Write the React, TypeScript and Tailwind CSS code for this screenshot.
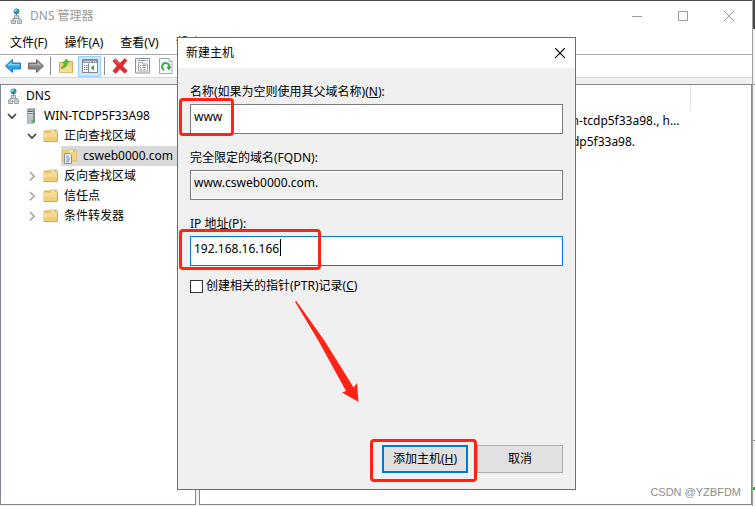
import type { ReactNode } from "react";

type IconProps = { className?: string };

function DnsIcon({ className }: IconProps) {
  return (
    <svg viewBox="0 0 16 16" className={className} aria-hidden="true">
      <path d="M8.500 6v5M5 12v-1.500h7V12" fill="none" stroke="#8b949b" />
      <circle cx="8.500" cy="3.300" r="2.900" fill="#2a72b8" />
      <path d="M6.300 2 8.500.8l.6 1.400-1.700 1.900-1.300-.6z" fill="#8edcf0" />
      <path d="M8.800 2.800l2.200-.4.2 1.800-2.200 1.600z" fill="#2fb54a" />
      <path d="M6.500 7.500h4v3h-4zM3.500 12h4v3.500h-4zM9.500 12h4v3.500h-4z" fill="#eceff1" stroke="#989fa5" />
      <path d="M7.500 9h2M4.500 13.800h2M10.500 13.800h2" stroke="#989fa5" />
    </svg>
  );
}

function ServerIcon({ className }: IconProps) {
  return (
    <svg viewBox="0 0 16 16" className={className} aria-hidden="true">
      <path d="M4 1.500 5.500.5H12v13.800l-1.600 1.200H4z" fill="#7c868e" />
      <path d="M4.400 1.800h5.800v13.400H4.400z" fill="#b8c1c8" />
      <path d="M5 3.500h4.600M5 5.800h4.600" stroke="#4b555d" />
      <path d="M5 4.500h4.600M5 6.800h4.600" stroke="#f4f6f7" strokeWidth=".8" />
      <path d="M8.400 12.400h2v2h-2z" fill="#37c437" />
    </svg>
  );
}

function FolderIcon({ className }: IconProps) {
  return (
    <svg viewBox="0 0 16 16" className={className} aria-hidden="true">
      <path d="M.5 3.500 1.300 2.500h5.500L8 1.500h6l.6.8V12L14 14H.5z" fill="#e3b95b" />
      <path d="M8.500 2.500h5.100v2H8.500z" fill="#fff" />
      <path d="M11 2.700h2.300v1H11z" fill="#3f9be0" />
      <path d="M1 4.400h6.500l1.200-.8h5.400v9.800H1z" fill="#f7dc90" />
      <path d="M1 9h13.100v4.400H1z" fill="#f1cf78" />
      <path d="M.5 13.600h13.700M14.400 4v9.400" stroke="#c99b3e" strokeWidth=".8" />
    </svg>
  );
}

function ZoneIcon({ className }: IconProps) {
  return (
    <svg viewBox="0 0 16 16" className={className} aria-hidden="true">
      <path d="M.5 2.500h6.500L8 1.500h6l.6.8V13H.5z" fill="#f3d27d" stroke="#ddb45a" strokeWidth=".6" />
      <path d="M8.500 2.400h5.100v1.600H8.500z" fill="#fff" />
      <path d="M11 2.600h2.300v1H11z" fill="#3f9be0" />
      <path d="M2.500 5.500h5l2 2v8h-7z" fill="#fff" stroke="#7a858e" strokeWidth=".9" />
      <path d="M4 8h3M4 10h4M4 12h4M4 13.800h3" stroke="#4478b4" strokeWidth=".9" />
    </svg>
  );
}

function Chevron({ open }: { open: boolean }) {
  return (
    <svg viewBox="0 0 16 16" className="size-4" aria-hidden="true">
      {open ? (
        <path d="m3 6 4 4 4-4" fill="none" stroke="#404040" strokeWidth="1.700" />
      ) : (
        <path d="m5 4 4.200 4.200L5 12.400" fill="none" stroke="#a3a3a3" strokeWidth="1.500" />
      )}
    </svg>
  );
}

function ArrowIcon({ back }: { back: boolean }) {
  return (
    <svg viewBox="0 0 16 16" className="size-4" aria-hidden="true">
      {back ? (
        <>
          <path d="M.4 8 7.400 1.500v3.500h8.100v6H7.400v3.500z" fill="#2da3e6" stroke="#1b6eae" strokeWidth=".9" />
          <path d="M2.200 7.600 6.500 3.700V6h8.100v1.600z" fill="#7bd0f7" />
        </>
      ) : (
        <>
          <path d="M15.600 8 8.600 1.500v3.500H.5v6h8.100v3.500z" fill="#868686" stroke="#5c5c5c" strokeWidth=".9" />
          <path d="M13.800 7.600 9.500 3.700V6H1.400v1.600z" fill="#adadad" />
        </>
      )}
    </svg>
  );
}

function FolderUpIcon() {
  return (
    <svg viewBox="0 0 16 16" className="size-4" aria-hidden="true">
      <path d="M1.500 4.500h4.500l1.200-1.200h7.300v11.300h-13z" fill="#f2d07c" stroke="#c99d45" strokeWidth=".8" />
      <path d="M2 9h12v5.200H2z" fill="#f6dc98" />
      <path d="M3 9.600C5.200 9 6.300 7.200 6.400 4.800L4.600 5 8.200 1l3.400 3-2 .3C9.200 7.600 7 10 3.400 10.600z" fill="#57bd34" stroke="#3f9a27" strokeWidth=".5" />
    </svg>
  );
}

function ConsoleTreeIcon() {
  return (
    <svg viewBox="0 0 16 16" className="size-4" aria-hidden="true">
      <path d="M.5 1.500h15v13H.5z" fill="#fff" stroke="#7c8791" />
      <path d="M1 2h14v3H1z" fill="#8d99a5" />
      <path d="M2 3.500h7" stroke="#c9d1d8" />
      <path d="M11 3.500h1M13 3.500h1" stroke="#fff" />
      <path d="M6.500 5.500v9" stroke="#7c8791" />
      <path d="M2 7.500h1M4 7.500h1.500M2 9.500h1M4 9.500h1.500M2 11.500h1M4 11.500h1.500" stroke="#3274b8" />
      <path d="M12 7v5.500L8.600 9.800z" fill="#38a52c" />
    </svg>
  );
}

function DeleteIcon() {
  return (
    <svg viewBox="0 0 16 16" className="size-4" aria-hidden="true">
      <path d="M.8 3 3.600.8 8 5.200 12.800.6 15 2.600 10.600 8l4.800 5-2.800 2.300L8 10.800 3.600 15.400.8 13l4.400-5z" fill="#dc2c30" stroke="#b5292c" strokeWidth=".6" />
      <path d="m2.500 2.800 1-.8L8 6.500" fill="none" stroke="#f3888a" strokeWidth=".9" />
    </svg>
  );
}

function PropertiesIcon() {
  return (
    <svg viewBox="0 0 16 16" className="size-4" aria-hidden="true">
      <path d="M.5.500h14v14.500H.5z" fill="#f7f8f9" stroke="#8b949b" />
      <path d="M2 2.500h9M12 2.500h1" stroke="#9ba5ad" />
      <path d="M3.500 4.500h4v1.500h5v7h-9z" fill="#fff" stroke="#8b949b" strokeWidth=".8" />
      <path d="M5 7.500h1M7 7.500h4M5 9.500h1M7 9.500h4" stroke="#4fa3d6" />
      <path d="M5 11.500h2M8.500 11.500h2" stroke="#8b949b" strokeWidth=".9" />
    </svg>
  );
}

function RefreshIcon() {
  return (
    <svg viewBox="0 0 16 16" className="size-4" aria-hidden="true">
      <path d="M1.500.5h9.500l3 3v12H1.500z" fill="#fff" stroke="#a0a7ad" />
      <path d="M11 .5v3h3" fill="#e6eaed" stroke="#a0a7ad" strokeWidth=".8" />
      <path d="M6.300 12A3.600 3.600 0 1 1 11.300 9" fill="none" stroke="#3cad42" strokeWidth="1.900" />
      <path d="M8.400 8.700h5L11 12.600z" fill="#2fa336" />
    </svg>
  );
}

const menus = ["文件(F)", "操作(A)", "查看(V)", "帮助(H)"];

type TreeItem = {
  label: string;
  icon: (props: IconProps) => ReactNode;
  indent: string;
  open?: boolean;
  selected?: boolean;
};

const tree: TreeItem[] = [
  { label: "DNS", icon: DnsIcon, indent: "pl-1" },
  { label: "WIN-TCDP5F33A98", icon: ServerIcon, indent: "pl-1", open: true },
  { label: "正向查找区域", icon: FolderIcon, indent: "pl-6", open: true },
  { label: "csweb0000.com", icon: ZoneIcon, indent: "pl-[60px]", selected: true },
  { label: "反向查找区域", icon: FolderIcon, indent: "pl-6", open: false },
  { label: "信任点", icon: FolderIcon, indent: "pl-6", open: false },
  { label: "条件转发器", icon: FolderIcon, indent: "pl-6", open: false },
];

const records = [
  { name: "(与父文件夹相同)", type: "起始授权机构(SOA)", data: "[1], win-tcdp5f33a98., h..." },
  { name: "(与父文件夹相同)", type: "名称服务器(NS)", data: "win-tcdp5f33a98." },
];

function TitleBar() {
  return (
    <header className="flex h-[29px] items-center bg-white text-[#999999]">
      <DnsIcon className="ml-2 size-4" />
      <h1 className="ml-1.5 flex-1 leading-4">DNS 管理器</h1>
      <button aria-label="最小化" className="flex h-7 w-[46px] items-center justify-center">
        <svg viewBox="0 0 10 10" className="size-2.5">
          <path d="M0 5.500h10" stroke="#999" />
        </svg>
      </button>
      <button aria-label="最大化" className="flex h-7 w-[46px] items-center justify-center">
        <svg viewBox="0 0 10 10" className="size-2.5">
          <path d="M.5.500h9v9h-9z" fill="none" stroke="#999" />
        </svg>
      </button>
      <button aria-label="关闭" className="flex h-7 w-[46px] items-center justify-center">
        <svg viewBox="0 0 10 10" className="size-2.5">
          <path d="m0 0 10 10M10 0 0 10" stroke="#999" />
        </svg>
      </button>
    </header>
  );
}

function ToolButton({ label, active, children }: { label: string; active?: boolean; children: ReactNode }) {
  return (
    <button
      aria-label={label}
      className={
        active
          ? "flex h-[21px] w-[23px] items-center justify-center border border-[#99d1ff] bg-[#cce8ff]"
          : "flex h-[21px] w-[23px] items-center justify-center"
      }
    >
      {children}
    </button>
  );
}

function Toolbar() {
  return (
    <div className="flex h-6 items-center border-y border-t-[#a9a9a9] border-b-[#d9d9d9] bg-white pl-px">
      <ToolButton label="后退"><ArrowIcon back /></ToolButton>
      <ToolButton label="前进"><ArrowIcon back={false} /></ToolButton>
      <span className="mx-[3px] h-[18px] w-px bg-[#8c8c8c]" />
      <ToolButton label="上一级"><FolderUpIcon /></ToolButton>
      <span className="w-px" />
      <ToolButton label="显示/隐藏控制台树" active><ConsoleTreeIcon /></ToolButton>
      <span className="mx-[3px] h-[18px] w-px bg-[#8c8c8c]" />
      <ToolButton label="删除"><DeleteIcon /></ToolButton>
      <ToolButton label="属性"><PropertiesIcon /></ToolButton>
      <ToolButton label="刷新"><RefreshIcon /></ToolButton>
    </div>
  );
}

function Tree() {
  return (
    <ul className="w-[196px] shrink-0 border border-[#828790] bg-white pt-px">
      {tree.map(({ label, icon: Icon, indent, open, selected }) => (
        <li key={label} className={`flex h-5 items-center ${indent}`}>
          {open !== undefined && (
            <button aria-label={open ? "折叠" : "展开"} className="mr-[2px]">
              <Chevron open={open} />
            </button>
          )}
          <span className={`flex h-5 items-center gap-[5px] ${selected ? "bg-[#d9d9d9] pl-px pr-1" : ""}`}>
            <Icon className="size-4" />
            <span className="whitespace-nowrap leading-4">{label}</span>
          </span>
        </li>
      ))}
    </ul>
  );
}

function RecordList() {
  return (
    <div className="min-w-0 flex-1 overflow-hidden border border-[#828790] bg-white">
      <table className="w-[491px] table-fixed border-collapse text-left">
        <thead>
          <tr className="h-[25px]">
            <th aria-label="名称" className="w-[170px] border-r border-[#e5e5e5]" />
            <th aria-label="类型" className="w-[160px] border-r border-[#e5e5e5]" />
            <th aria-label="数据" className="border-r border-[#e5e5e5]" />
          </tr>
        </thead>
        <tbody>
          {records.map((r) => (
            <tr key={r.type} className="h-[21px] whitespace-nowrap">
              <td className="pl-2">{r.name}</td>
              <td className="pl-2">{r.type}</td>
              <td className="pl-2">{r.data}</td>
            </tr>
          ))}
        </tbody>
      </table>
    </div>
  );
}

// Red annotation frame laid over the control it points out.
function Mark({ className }: { className: string }) {
  return <span className={`pointer-events-none absolute rounded-[4px] border-[3px] border-[#ff2316] ${className}`} />;
}

function NewHostDialog() {
  return (
    <section
      role="dialog"
      aria-labelledby="dialog-title"
      className="absolute left-[177px] top-[37px] flex h-[453px] w-[399px] flex-col border border-[#6e6e6e] bg-[#f0f0f0]"
    >
      <div className="flex h-[30px] items-center justify-between bg-white pl-2">
        <h2 id="dialog-title" className="leading-4">新建主机</h2>
        <button aria-label="关闭" className="flex size-[30px] items-center justify-center">
          <svg viewBox="0 0 10 10" className="size-2.5">
            <path d="m0 0 10 10M10 0 0 10" stroke="#000" strokeWidth="1.200" />
          </svg>
        </button>
      </div>

      <form className="flex flex-1 flex-col px-3 pb-4 pt-4" onSubmit={(e) => e.preventDefault()}>
        <div className="flex flex-col gap-4">
          <div className="flex flex-col gap-1">
            <label htmlFor="host" className="leading-4">
              名称(如果为空则使用其父域名称)(<u>N</u>):
            </label>
            <div className="relative">
              <input id="host" defaultValue="www" className="block h-[30px] w-full border border-[#7a7a7a] bg-white px-[3px] pb-1.5 outline-none" />
              <Mark className="-left-[11px] -top-1.5 h-[38px] w-[55px]" />
            </div>
          </div>

          <div className="flex flex-col gap-1">
            <label htmlFor="fqdn" className="leading-4">完全限定的域名(FQDN):</label>
            <input
              id="fqdn"
              readOnly
              defaultValue="www.csweb0000.com."
              className="block h-[30px] w-full border border-[#7a7a7a] bg-[#f0f0f0] px-[3px] pb-1.5 outline-none ring-1 ring-inset ring-white"
            />
          </div>

          <div className="flex flex-col gap-1">
            <label htmlFor="ip" className="leading-4">IP 地址(P):</label>
            <div className="relative">
              <input id="ip" defaultValue="192.168.16.166" className="block h-[30px] w-full border border-[#0078d7] bg-white px-[3px] pb-1.5 outline-none" />
              <span className="absolute left-[90px] top-[3px] h-[17px] w-px bg-black" />
              <Mark className="-left-[11px] -top-[7px] h-[41px] w-[142px]" />
            </div>
          </div>
        </div>

        <label className="mt-3 flex items-center gap-[3px] leading-4">
          <input type="checkbox" className="size-[13px] appearance-none border border-[#333333] bg-white" />
          <span>创建相关的指针(PTR)记录(<u>C</u>)</span>
        </label>

        <div className="mt-auto flex justify-end gap-[9px]">
          <div className="relative">
            <button type="submit" className="block h-7 w-[86px] border-2 border-[#0078d7] bg-[#e1e1e1]">
              添加主机(<u>H</u>)
            </button>
            <Mark className="-left-3 -top-1.5 h-[43px] w-[107px]" />
          </div>
          <button type="button" className="h-7 w-[86px] border border-[#adadad] bg-[#e1e1e1]">取消</button>
        </div>
      </form>

      <svg viewBox="0 0 64 101" className="pointer-events-none absolute left-[117px] top-[263px] h-[101px] w-16" aria-hidden="true">
        <path d="M0 .8 1.300 0 29 39 58.700 86.500 62 82 63.500 101 47 91.500 51 90 23 39z" fill="#ff2316" />
      </svg>
    </section>
  );
}

export default function App() {
  return (
    <div className="relative flex min-h-screen bg-[#e3e3e3] font-['Noto_Sans','Noto_Sans_CJK_SC',sans-serif] text-xs text-black">
      <main className="flex min-w-0 flex-1 flex-col border-t border-[#4a4a4a] bg-[#f0f0f0]">
        <TitleBar />
        <nav className="flex h-6 items-center gap-[17px] bg-white pl-2.5 pt-px">
          {menus.map((m) => (
            <button key={m} className="whitespace-nowrap leading-4">{m}</button>
          ))}
        </nav>
        <Toolbar />
        <div className="mt-1.5 flex flex-1 gap-[3px] pb-px">
          <Tree />
          <RecordList />
        </div>
      </main>

      {/* sliver of the desktop behind the window */}
      <div className="flex w-[3px] flex-col border-l border-[#a0a0a0] bg-[#f0f0f0]">
        <div className="h-[29px] bg-[#4a4a4a]" />
        <div className="h-14 border-b border-[#828790]" />
        <div className="h-[356px] border-b border-[#828790]" />
        <div className="mt-[46px] h-[3px] bg-[#19c219]" />
      </div>

      <NewHostDialog />
      <p className="absolute bottom-1.5 right-3.5 font-['Liberation_Sans',sans-serif] text-[11px] leading-4 text-[#8c8c8c]">CSDN @YZBFDM</p>
    </div>
  );
}
